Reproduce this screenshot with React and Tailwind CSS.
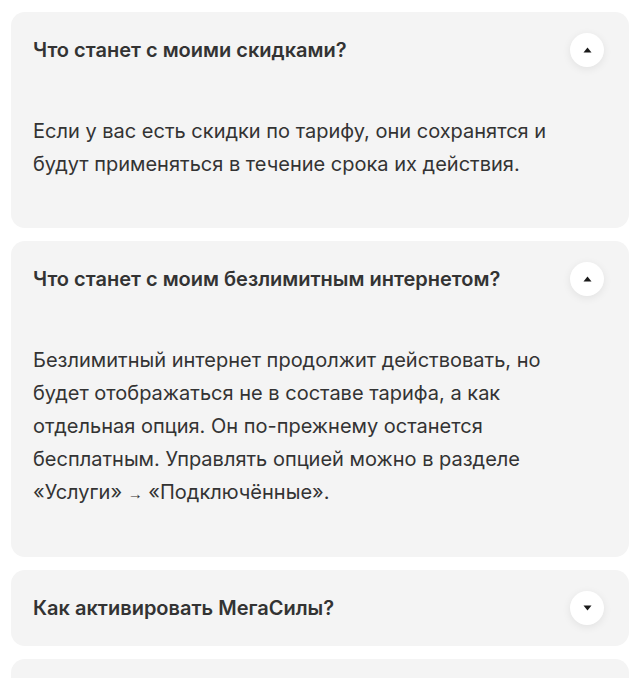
import React, { useState } from 'react';

const faq = [
  {
    q: 'Что станет с моими скидками?',
    a: 'Если у вас есть скидки по тарифу, они сохранятся и будут применяться в течение срока их действия.',
    open: true,
  },
  {
    q: 'Что станет с моим безлимитным интернетом?',
    a: (
      <>
        Безлимитный интернет продолжит действовать, но будет отображаться не в составе тарифа, а как отдельная опция.
        Он по-прежнему останется бесплатным. Управлять опцией можно в разделе «Услуги»{' '}
        <span className="font-['Liberation_Sans',_sans-serif] text-[15px]">→</span> «Подключённые».
      </>
    ),
    open: true,
  },
  { q: 'Как активировать МегаСилы?', a: null, open: false },
];

function Toggle({ open }) {
  return (
    <span className="flex h-[34px] w-[34px] shrink-0 items-center justify-center rounded-full bg-white shadow-[0_2px_8px_rgba(0,0,0,0.08)]">
      <svg width="9" height="6" viewBox="0 0 9 6" className={open ? '' : 'rotate-180'}>
        <path d="M4.5 0.5 L8.5 5.5 L0.5 5.5 Z" fill="#1a1a1a" />
      </svg>
    </span>
  );
}

function FaqItem({ item }) {
  const [open, setOpen] = useState(item.open);
  return (
    <div className="rounded-[14px] bg-[#f4f4f4]">
      <button
        onClick={() => setOpen(!open)}
        className="flex h-[76px] w-full items-center justify-between pl-[22px] pr-[25px] text-left"
      >
        <span className="text-[20px] font-semibold text-[#333]">{item.q}</span>
        <Toggle open={open} />
      </button>
      {open && item.a && (
        <p className="pl-[22px] pr-[50px] pt-[27px] pb-[47px] text-[20px] leading-[33px] text-[#333]">{item.a}</p>
      )}
    </div>
  );
}

export default function App() {
  return (
    <div className="flex h-[678px] flex-col gap-[13px] overflow-hidden bg-white px-[11px] pt-[12px] font-['Inter',_'Liberation_Sans',_sans-serif]">
      {faq.map((item) => (
        <FaqItem key={item.q} item={item} />
      ))}
      {/* next card peeks in at the bottom edge */}
      <div className="h-[76px] shrink-0 rounded-[14px] bg-[#f4f4f4]" />
    </div>
  );
}
